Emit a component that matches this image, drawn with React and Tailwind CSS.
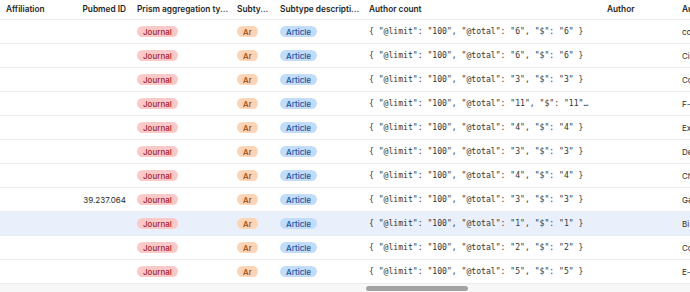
import React from 'react';

const rows = [
    { pubmed: '', count: 6, author: 'cognitive decline' },
    { pubmed: '', count: 6, author: 'Circulating biomarkers' },
    { pubmed: '', count: 3, author: 'Comparative analysis' },
    { pubmed: '', count: 11, author: 'F-18 imaging study' },
    { pubmed: '', count: 4, author: 'Exercise and memory' },
    { pubmed: '', count: 3, author: 'Depression outcomes' },
    { pubmed: '', count: 4, author: 'Characterization of' },
    { pubmed: '39.237.064', count: 3, author: 'Gait speed analysis' },
    { pubmed: '', count: 1, author: 'Biomarker profiles', selected: true },
    { pubmed: '', count: 2, author: 'Cohort follow-up' },
    { pubmed: '', count: 5, author: 'E-health platform' },
];

const Badge = ({ tone, children }) => {
    const tones = {
        red: 'bg-[#fcc9c9] text-[#a3232a]',
        orange: 'bg-[#fdd5b4] text-[#9a4514]',
        blue: 'bg-[#c2dcfb] text-[#1f4f9c]',
    };
    return (
        <span className={`inline-flex items-center h-[11px] px-1.5 rounded-full text-[8px] font-medium leading-none ${tones[tone]}`}>
            {children}
        </span>
    );
};

// the long counts are cut with an ellipsis in the grid
const countText = (n) => {
    const full = `{ "@limit": "100", "@total": "${n}", "$": "${n}" }`;
    return full.length > 44 ? full.slice(0, 44) + '…' : full;
};

const App = () => {
    const sans = { fontFamily: 'Inter, "Noto Sans", sans-serif' };

    return (
        <div className="relative w-[690px] h-[292px] overflow-hidden bg-[#f7f7f7] text-[#2b2b2b]" style={sans}>
            {/* header */}
            <div className="flex items-center h-[20px] bg-white border-b border-[#ececec] text-[8.3px] font-semibold text-[#1f1f1f] whitespace-nowrap">
                <div className="w-[77px] shrink-0 pl-1.5">Affiliation</div>
                <div className="w-[54px] shrink-0 pr-[5px] text-right">Pubmed ID</div>
                <div className="w-[100px] shrink-0 pl-1.5">Prism aggregation ty...</div>
                <div className="w-[43px] shrink-0 pl-1.5">Subty...</div>
                <div className="w-[89px] shrink-0 pl-1.5">Subtype descripti...</div>
                <div className="w-[234px] shrink-0 pl-1.5">Author count</div>
                <div className="w-[79px] shrink-0 pl-[10px]">Author</div>
                <div className="shrink-0 pl-1.5">Au</div>
            </div>

            {/* rows */}
            {rows.map((row, i) => (
                <div
                    key={i}
                    className={`flex items-center h-[24px] border-b border-[#ececec] text-[8px] whitespace-nowrap ${row.selected ? 'bg-[#e9f0fc]' : 'bg-white'}`}
                >
                    <div className="w-[77px] shrink-0 pl-1.5"></div>
                    <div className="w-[54px] shrink-0 pr-[5px] text-right">{row.pubmed}</div>
                    <div className="w-[100px] shrink-0 pl-1.5">
                        <Badge tone="red">Journal</Badge>
                    </div>
                    <div className="w-[43px] shrink-0 pl-1.5">
                        <Badge tone="orange">Ar</Badge>
                    </div>
                    <div className="w-[89px] shrink-0 pl-1.5">
                        <Badge tone="blue">Article</Badge>
                    </div>
                    <div
                        className="w-[234px] shrink-0 pl-1.5 pr-1.5 text-[8.1px] text-[#333]"
                        style={{ fontFamily: '"DejaVu Sans Mono", monospace' }}
                    >
                        {countText(row.count)}
                    </div>
                    <div className="w-[79px] shrink-0"></div>
                    <div className="shrink-0 pl-1.5">{row.author.slice(0, 2)}</div>
                </div>
            ))}

            {/* horizontal scrollbar thumb */}
            <div className="absolute left-[366px] bottom-[1px] w-[102px] h-[5px] rounded-full bg-[#a3a3a3]"></div>
        </div>
    );
};

export default App;
